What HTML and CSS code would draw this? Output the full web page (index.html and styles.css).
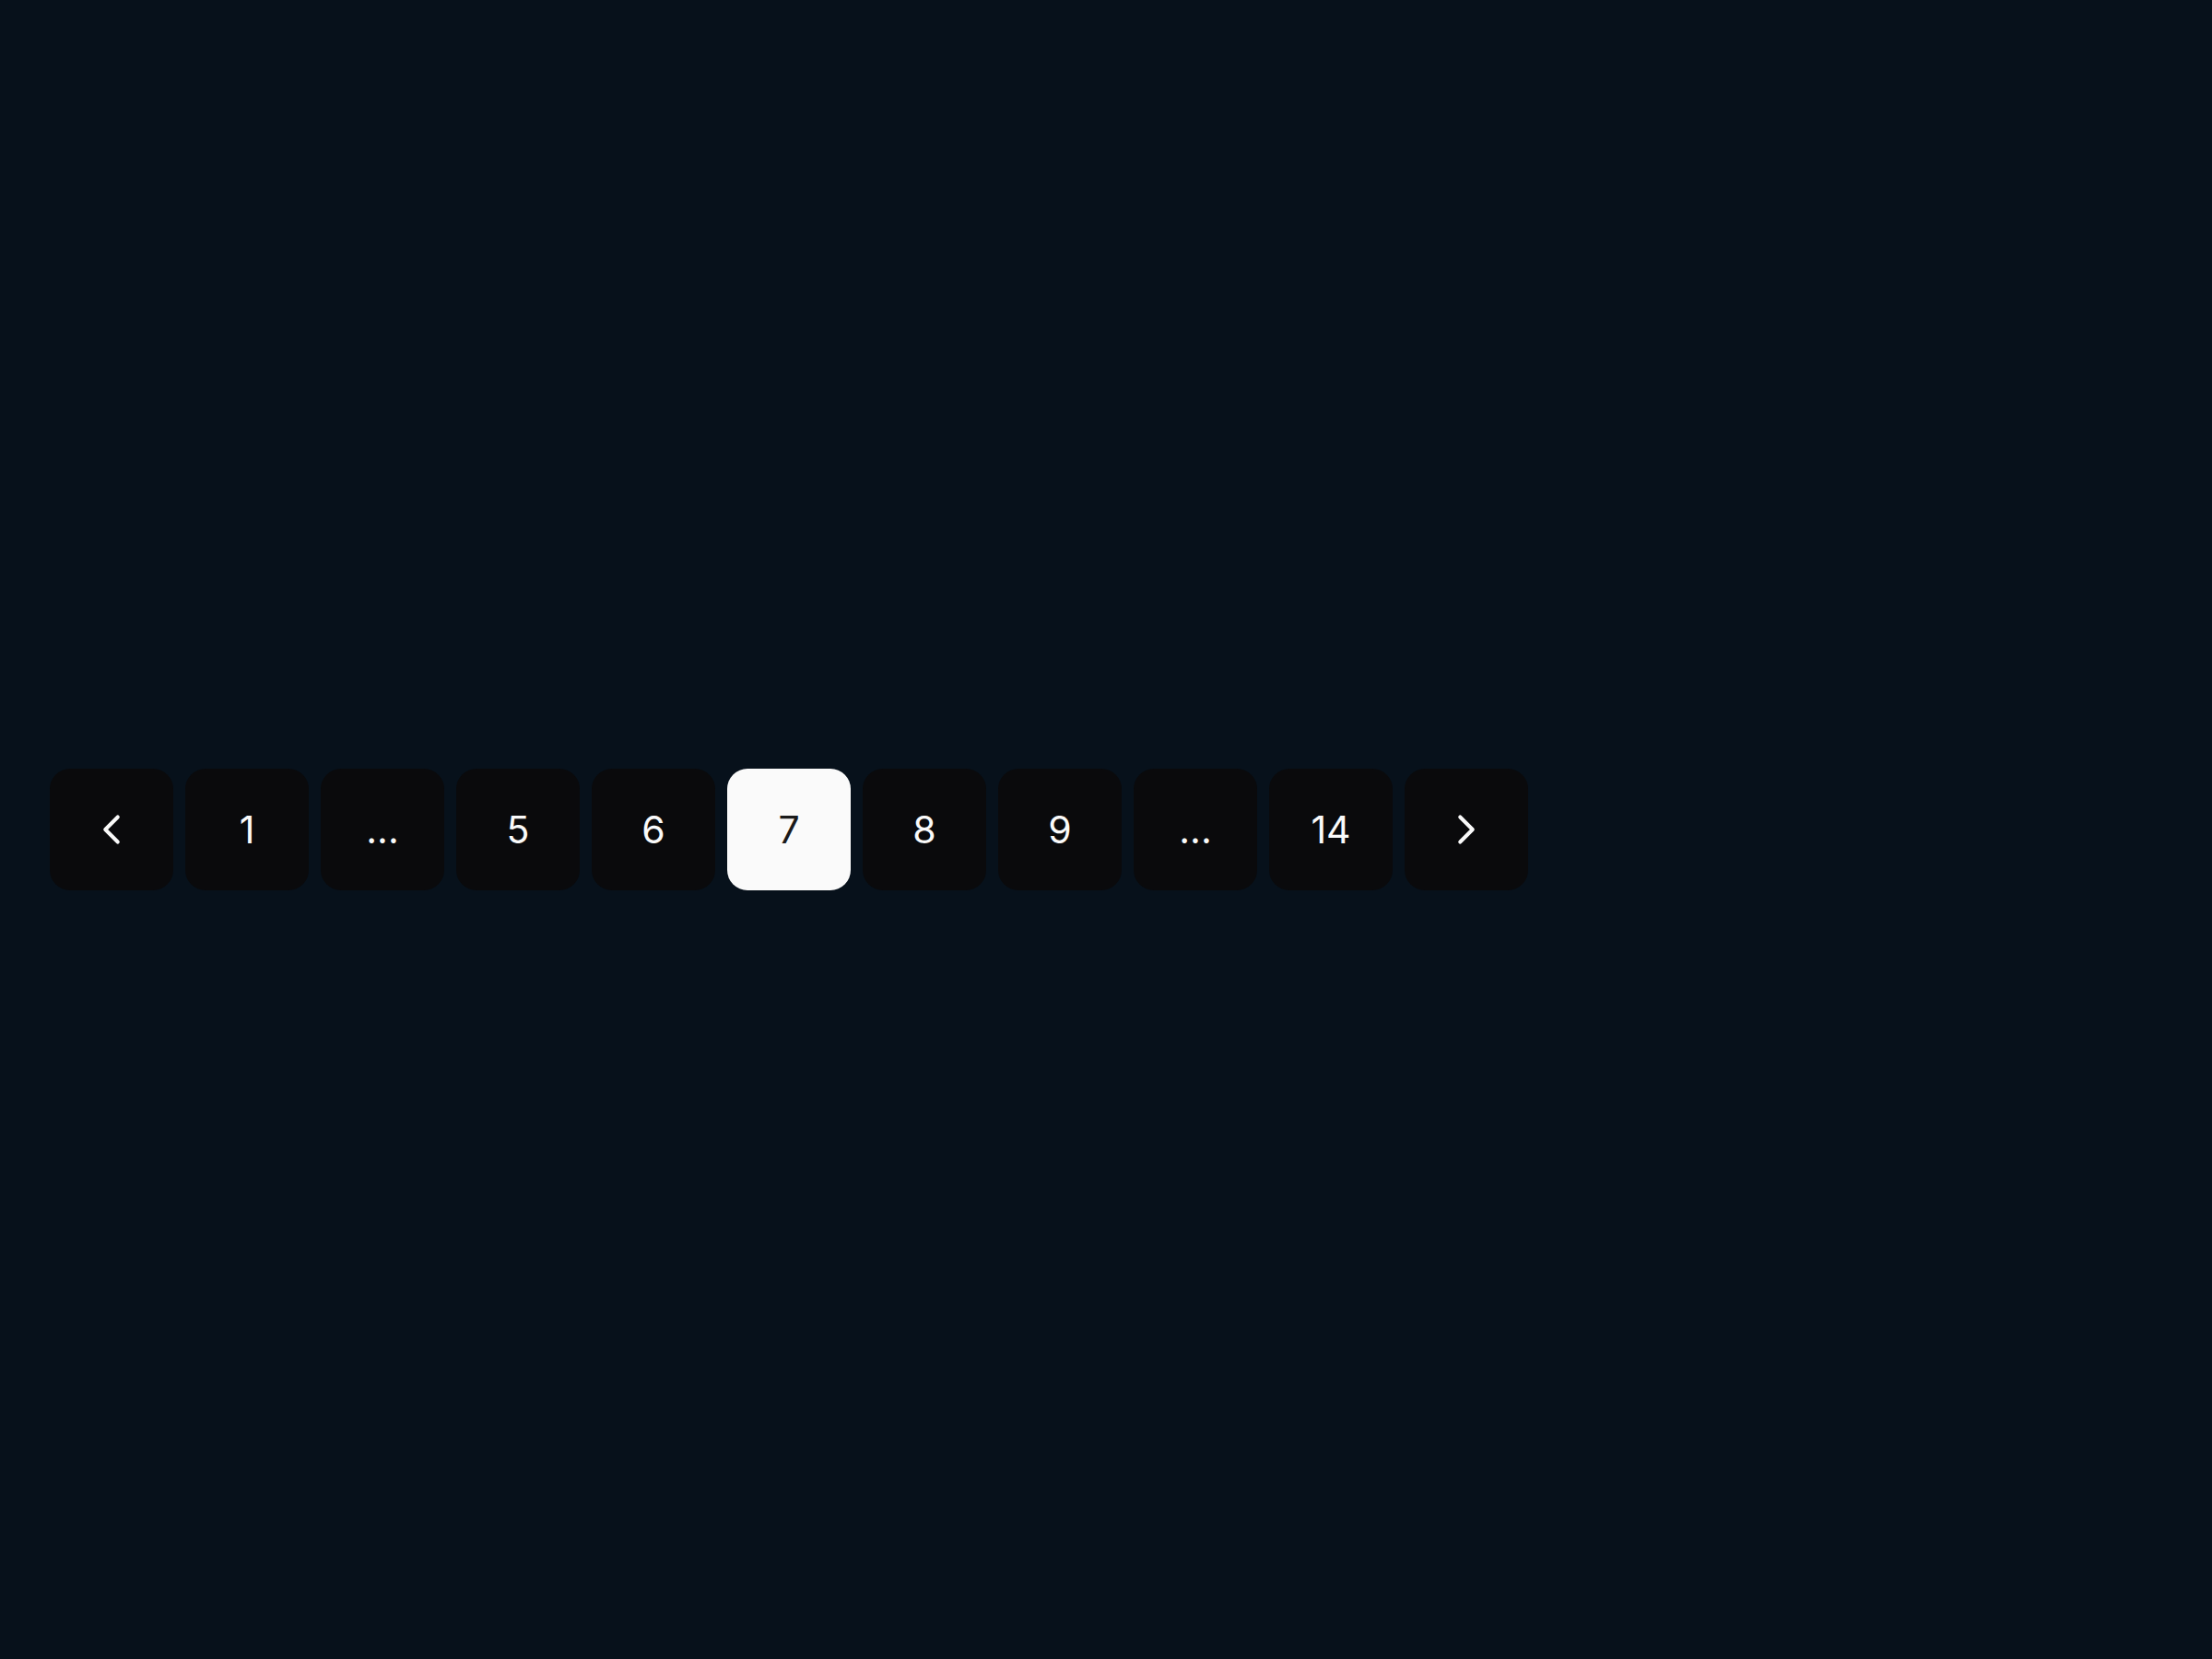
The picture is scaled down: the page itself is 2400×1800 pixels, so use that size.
FILE: index.html
```html
<!DOCTYPE html>
<html>
<head>
<meta charset="utf-8">
<link rel="stylesheet" href="styles.css">
</head>
<body>
<nav class="pager">
  <button class="pg"><svg class="chev" viewBox="0 0 24 24"><path d="m15 18-6-6 6-6"/></svg></button>
  <button class="pg">1</button>
  <button class="pg">...</button>
  <button class="pg">5</button>
  <button class="pg">6</button>
  <button class="pg active">7</button>
  <button class="pg">8</button>
  <button class="pg">9</button>
  <button class="pg">...</button>
  <button class="pg">14</button>
  <button class="pg"><svg class="chev" viewBox="0 0 24 24"><path d="m9 18 6-6-6-6"/></svg></button>
</nav>
</body>
</html>
```
FILE: styles.css
```css
html, body {
  margin: 0;
  padding: 0;
  background: #07111b;
  height: 100%;
}
body {
  font-family: Inter, "Noto Sans", sans-serif;
}
.pager {
  display: flex;
  gap: 13px;
  padding: 834px 0 0 54px;
}
.pg {
  width: 134px;
  height: 132px;
  border: none;
  border-radius: 22px;
  background: #0a0a0c;
  color: #fafafa;
  font-family: Inter, "Noto Sans", sans-serif;
  font-size: 41px;
  font-weight: 400;
  display: flex;
  align-items: center;
  justify-content: center;
  padding: 0;
}
.pg.active {
  background: #fafafa;
  color: #1a1a1a;
}
.chev {
  width: 54px;
  height: 54px;
  fill: none;
  stroke: #fafafa;
  stroke-width: 1.8;
  stroke-linecap: round;
  stroke-linejoin: round;
}
```
